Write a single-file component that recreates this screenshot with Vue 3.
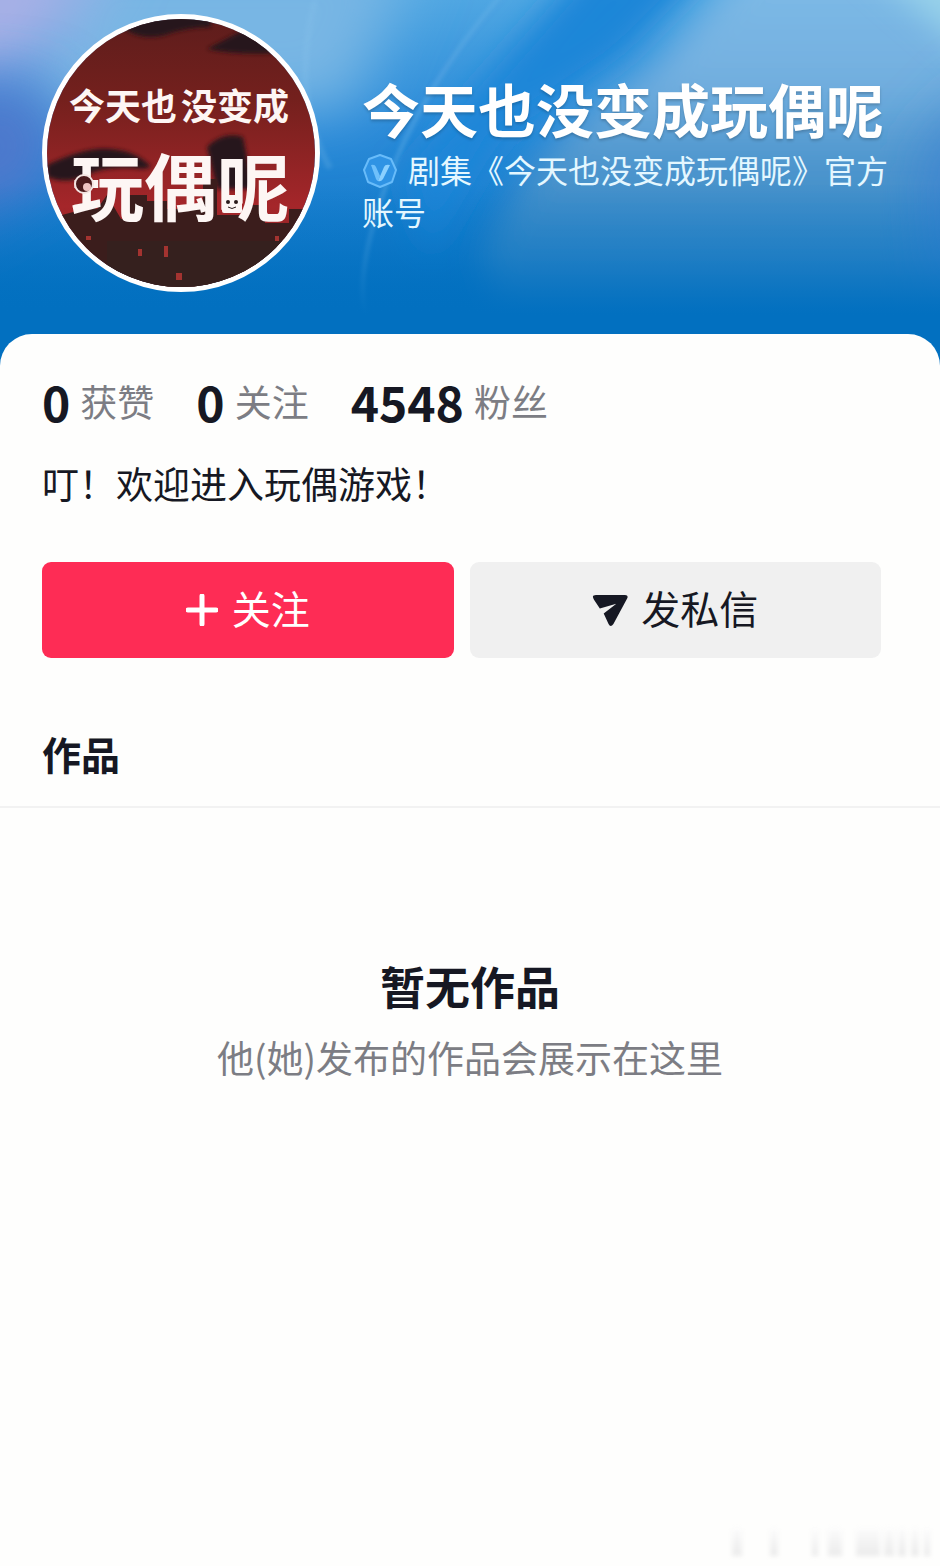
<template>
  <div class="page">
    <header class="banner">
      <svg class="banner-bg" viewBox="0 0 940 370" preserveAspectRatio="none" aria-hidden="true">
        <defs>
          <linearGradient id="sky" x1="0" y1="0" x2="0" y2="1">
            <stop offset="0" stop-color="#4fa6e2" />
            <stop offset="0.35" stop-color="#2a8ad8" />
            <stop offset="0.65" stop-color="#137bcb" />
            <stop offset="0.85" stop-color="#0270c0" />
            <stop offset="1" stop-color="#0270c0" />
          </linearGradient>
          <linearGradient id="fade" x1="0" y1="0" x2="0" y2="1">
            <stop offset="0.5" stop-color="#0270c0" stop-opacity="0" />
            <stop offset="0.7" stop-color="#0270c0" stop-opacity="0.45" />
            <stop offset="0.86" stop-color="#0270c0" stop-opacity="1" />
          </linearGradient>
          <linearGradient id="glow" x1="0" y1="0" x2="0" y2="1">
            <stop offset="0" stop-color="#80bde8" />
            <stop offset="0.35" stop-color="#74b0e0" />
            <stop offset="0.6" stop-color="#4b94cc" />
            <stop offset="1" stop-color="#2a82c4" />
          </linearGradient>
          <filter id="soft" x="-50%" y="-50%" width="200%" height="200%">
            <feGaussianBlur stdDeviation="30" />
          </filter>
          <filter id="edge" x="-50%" y="-50%" width="200%" height="200%">
            <feGaussianBlur stdDeviation="16" />
          </filter>
          <filter id="thin" x="-50%" y="-50%" width="200%" height="200%">
            <feGaussianBlur stdDeviation="2" />
          </filter>
        </defs>
        <rect width="940" height="370" fill="url(#sky)" />
        <path d="M60 -60H420L350 110L160 110L20 130Z" fill="#78b6e4" filter="url(#soft)" />
        <path d="M-60 -60H120L50 50L-60 110Z" fill="#a8b0e6" filter="url(#soft)" />
        <path d="M-60 80L50 90L60 180L-60 250Z" fill="#4f78cc" filter="url(#soft)" />
        <path d="M590 -40H720L620 60L500 140L430 260L400 180Z" fill="#1a86d8" filter="url(#edge)" />
        <path d="M760 -50H1000V320H500L480 260Q540 130 650 70Z" fill="url(#glow)" filter="url(#edge)" />
        <path d="M840 -60H1000V80Z" fill="#98d2ea" filter="url(#edge)" />
        <path d="M1000 80L920 160L930 300H1000Z" fill="#3d84d0" filter="url(#soft)" />
        <path d="M505 -10Q420 90 385 190T370 330" fill="none" stroke="#6db4e8" stroke-width="3" opacity="0.55" filter="url(#thin)" />
        <path d="M315 0Q290 100 330 170" fill="none" stroke="#8fc8ee" stroke-width="6" opacity="0.2" filter="url(#thin)" />
        <rect width="940" height="370" fill="url(#fade)" />
      </svg>

      <div class="avatar">
        <svg viewBox="0 0 268 268" role="img" aria-label="今天也没变成玩偶呢">
          <defs>
            <linearGradient id="dusk" x1="0" y1="0" x2="0" y2="1">
              <stop offset="0" stop-color="#5e1d1c" />
              <stop offset="0.3" stop-color="#74201d" />
              <stop offset="0.7" stop-color="#a5262a" />
              <stop offset="1" stop-color="#7a2020" />
            </linearGradient>
            <filter id="haze">
              <feGaussianBlur stdDeviation="2" />
            </filter>
          </defs>
          <rect width="268" height="268" fill="url(#dusk)" />
          <g fill="#26191a" filter="url(#haze)">
            <path d="M78 10Q95 22 118 16Q140 8 164 8V-4H70Z" />
            <path d="M160 30Q190 14 200 10L250 34L226 34Q190 36 160 30Z" />
            <path d="M0 146Q30 132 50 130Q86 128 104 148L96 150Q60 146 40 156Q20 166 0 158Z" />
            <path d="M160 128Q176 112 196 118L206 170H170Z" />
          </g>
          <path d="M0 200L30 192L34 184L50 190L60 176L74 200H82V176H100V182H120V190H156V160H170V196H200V186H218V204H242V190H268V268H0Z" fill="#3b1d1c" />
          <path d="M60 222H240V268H60Z" fill="#35201e" />
          <g fill="#a33330">
            <rect x="91" y="230" width="4" height="7" />
            <rect x="117" y="227" width="4" height="11" />
            <rect x="129" y="254" width="6" height="7" />
            <rect x="39" y="217" width="5" height="4" />
            <rect x="228" y="217" width="4" height="5" />
          </g>
          <text class="logo-small" x="22" y="101">今天也</text>
          <text class="logo-small" x="134" y="101">没变成</text>
          <text class="logo-large" x="24" y="196">玩偶呢</text>
          <circle cx="37" cy="165" r="9" fill="#4a1b1d" stroke="#f4e4e2" stroke-width="2" />
          <circle cx="40" cy="168" r="4" fill="#eec4c2" />
          <rect x="175" y="176" width="20" height="18" rx="2" fill="#fdf6f4" />
          <circle cx="181" cy="183" r="2" fill="#2a1a1a" />
          <circle cx="189" cy="183" r="2" fill="#2a1a1a" />
          <path d="M181 188Q185 191 189 188" fill="none" stroke="#2a1a1a" stroke-width="1" />
        </svg>
      </div>

      <div class="identity">
        <h1>{{ profile.name }}</h1>
        <p class="verify">
          <svg class="badge" viewBox="0 0 36 36" aria-hidden="true">
            <path d="M18 2L29 6L34 17L30 29L18 34L6 29L2 17L7 6Z" fill="#2f93e4" stroke="#68bcfa" stroke-width="2" stroke-linejoin="round" />
            <path d="M9 12Q13 11 14 14L18 23L16 28Q15 28 14 26Z" fill="#6fc0fb" />
            <path d="M16 28L22 14Q23 11 28 12L21 26Q19 29 16 28Z" fill="#8bd0ff" />
          </svg>{{ profile.verify }}
        </p>
      </div>
    </header>

    <main class="card">
      <ul class="stats">
        <li v-for="item in stats" :key="item.label">
          <strong>{{ item.value }}</strong><span>{{ item.label }}</span>
        </li>
      </ul>

      <p class="bio">{{ profile.bio }}</p>

      <div class="actions">
        <button type="button" class="btn btn-follow">
          <svg class="icon-plus" viewBox="0 0 32 32" aria-hidden="true">
            <path d="M16 2V30M2 16H30" fill="none" stroke="#fff" stroke-width="5" stroke-linecap="round" />
          </svg>
          <span>关注</span>
        </button>
        <button type="button" class="btn btn-message">
          <svg class="icon-send" viewBox="0 0 38 34" aria-hidden="true">
            <path d="M4 1H34Q38 1 36 5L22 31Q19 35 17 31L12 20L25 10L8 15L2 6Q-1 1 4 1Z" fill="#161823" />
          </svg>
          <span>发私信</span>
        </button>
      </div>

      <h2 class="tab">作品</h2>

      <section class="empty">
        <h3>暂无作品</h3>
        <p>他(她)发布的作品会展示在这里</p>
      </section>

      <div class="watermark" aria-hidden="true">
        <i v-for="(w, i) in watermark" :key="i" :style="{ width: w + 'px' }"></i>
      </div>
    </main>
  </div>
</template>

<script setup>
import { ref } from 'vue';

const profile = ref({
  name: '今天也没变成玩偶呢',
  verify: '剧集《今天也没变成玩偶呢》官方账号',
  bio: '叮！欢迎进入玩偶游戏！'
});

const stats = ref([
  { label: '获赞', value: '0' },
  { label: '关注', value: '0' },
  { label: '粉丝', value: '4548' }
]);

// 条宽与间距交替排列
const watermark = [10, 28, 8, 34, 6, 10, 14, 14, 24, 4, 10, 4, 8, 5, 8, 5, 6];
</script>

<style>
body {
  margin: 0;
  background: #fefefd;
}
</style>

<style scoped>
.page {
  font-family: 'Noto Sans CJK SC', sans-serif;
  color: #161823;
  min-height: 100vh;
  display: flex;
  flex-direction: column;
}

h1, h2, h3, p, ul {
  margin: 0;
  padding: 0;
}

/* BANNER */
.banner {
  position: relative;
  display: flex;
  align-items: flex-start;
  gap: 42px;
  padding: 14px 42px 74px;
  background: #0270c0;
  overflow: hidden;
}

.banner-bg {
  position: absolute;
  top: 0; left: 0;
  width: 100%; height: 100%;
}

.avatar {
  position: relative;
  flex: none;
  width: 268px;
  height: 268px;
  border: 5px solid #fff;
  border-radius: 50%;
  overflow: hidden;
}

.avatar svg {
  display: block;
  width: 100%;
  height: 100%;
}

.logo-small {
  font-size: 36px;
  font-weight: bold;
  fill: #fdf6f4;
}

.logo-large {
  font-size: 73px;
  font-weight: bold;
  fill: #fdf6f4;
}

.identity {
  position: relative;
  flex: 1;
  padding-top: 64px;
  color: #fff;
}

.identity h1 {
  font-size: 58px;
  line-height: 60px;
  font-weight: bold;
  white-space: nowrap;
  text-shadow: 0 2px 3px rgba(0,0,0,0.2);
}

.verify {
  margin-top: 10px;
  font-size: 32px;
  line-height: 42px;
  color: #e4f7ff;
}

.badge {
  width: 36px;
  height: 36px;
  margin-right: 10px;
  vertical-align: -6px;
}

/* CARD */
.card {
  position: relative;
  flex: 1;
  display: flex;
  flex-direction: column;
  margin-top: -32px;
  padding-top: 39px;
  background: #fefefd;
  border-radius: 32px 32px 0 0;
}

.stats {
  display: flex;
  gap: 42px;
  padding: 0 42px;
  list-style: none;
}

.stats li {
  display: flex;
  align-items: center;
  gap: 10px;
  line-height: 56px;
}

.stats strong {
  font-size: 48px;
  font-weight: bold;
}

.stats span {
  font-size: 37px;
  color: #7c7d84;
}

.bio {
  padding: 26px 42px 0;
  font-size: 37px;
  line-height: 56px;
}

.actions {
  display: flex;
  gap: 16px;
  padding: 51px 59px 0 42px;
}

.btn {
  flex: 1;
  display: flex;
  align-items: center;
  justify-content: center;
  height: 96px;
  border: none;
  border-radius: 9px;
  font-family: inherit;
  font-size: 39px;
  cursor: pointer;
}

.btn span {
  padding-bottom: 6px;
}

.btn-follow {
  gap: 14px;
  background: #fe2c55;
  color: #fff;
}

.btn-message {
  gap: 12px;
  background: #f0f0f0;
  color: #161823;
}

.icon-plus {
  width: 32px;
  height: 32px;
}

.icon-send {
  width: 37px;
  height: 33px;
}

.tab {
  padding: 66px 42px 24px;
  font-size: 39px;
  line-height: 58px;
  font-weight: bold;
  border-bottom: 2px solid #f2f2f2;
}

.empty {
  padding-top: 145px;
  text-align: center;
}

.empty h3 {
  font-size: 45px;
  line-height: 66px;
  font-weight: bold;
}

.empty p {
  margin-top: 10px;
  font-size: 37px;
  line-height: 56px;
  color: #7c7d84;
}

.watermark {
  display: flex;
  justify-content: flex-end;
  height: 28px;
  margin-top: auto;
  padding: 0 10px 10px;
  filter: blur(2px);
}

.watermark i:nth-child(odd) {
  background: linear-gradient(#fcfcfc, #ebebeb);
}
</style>
